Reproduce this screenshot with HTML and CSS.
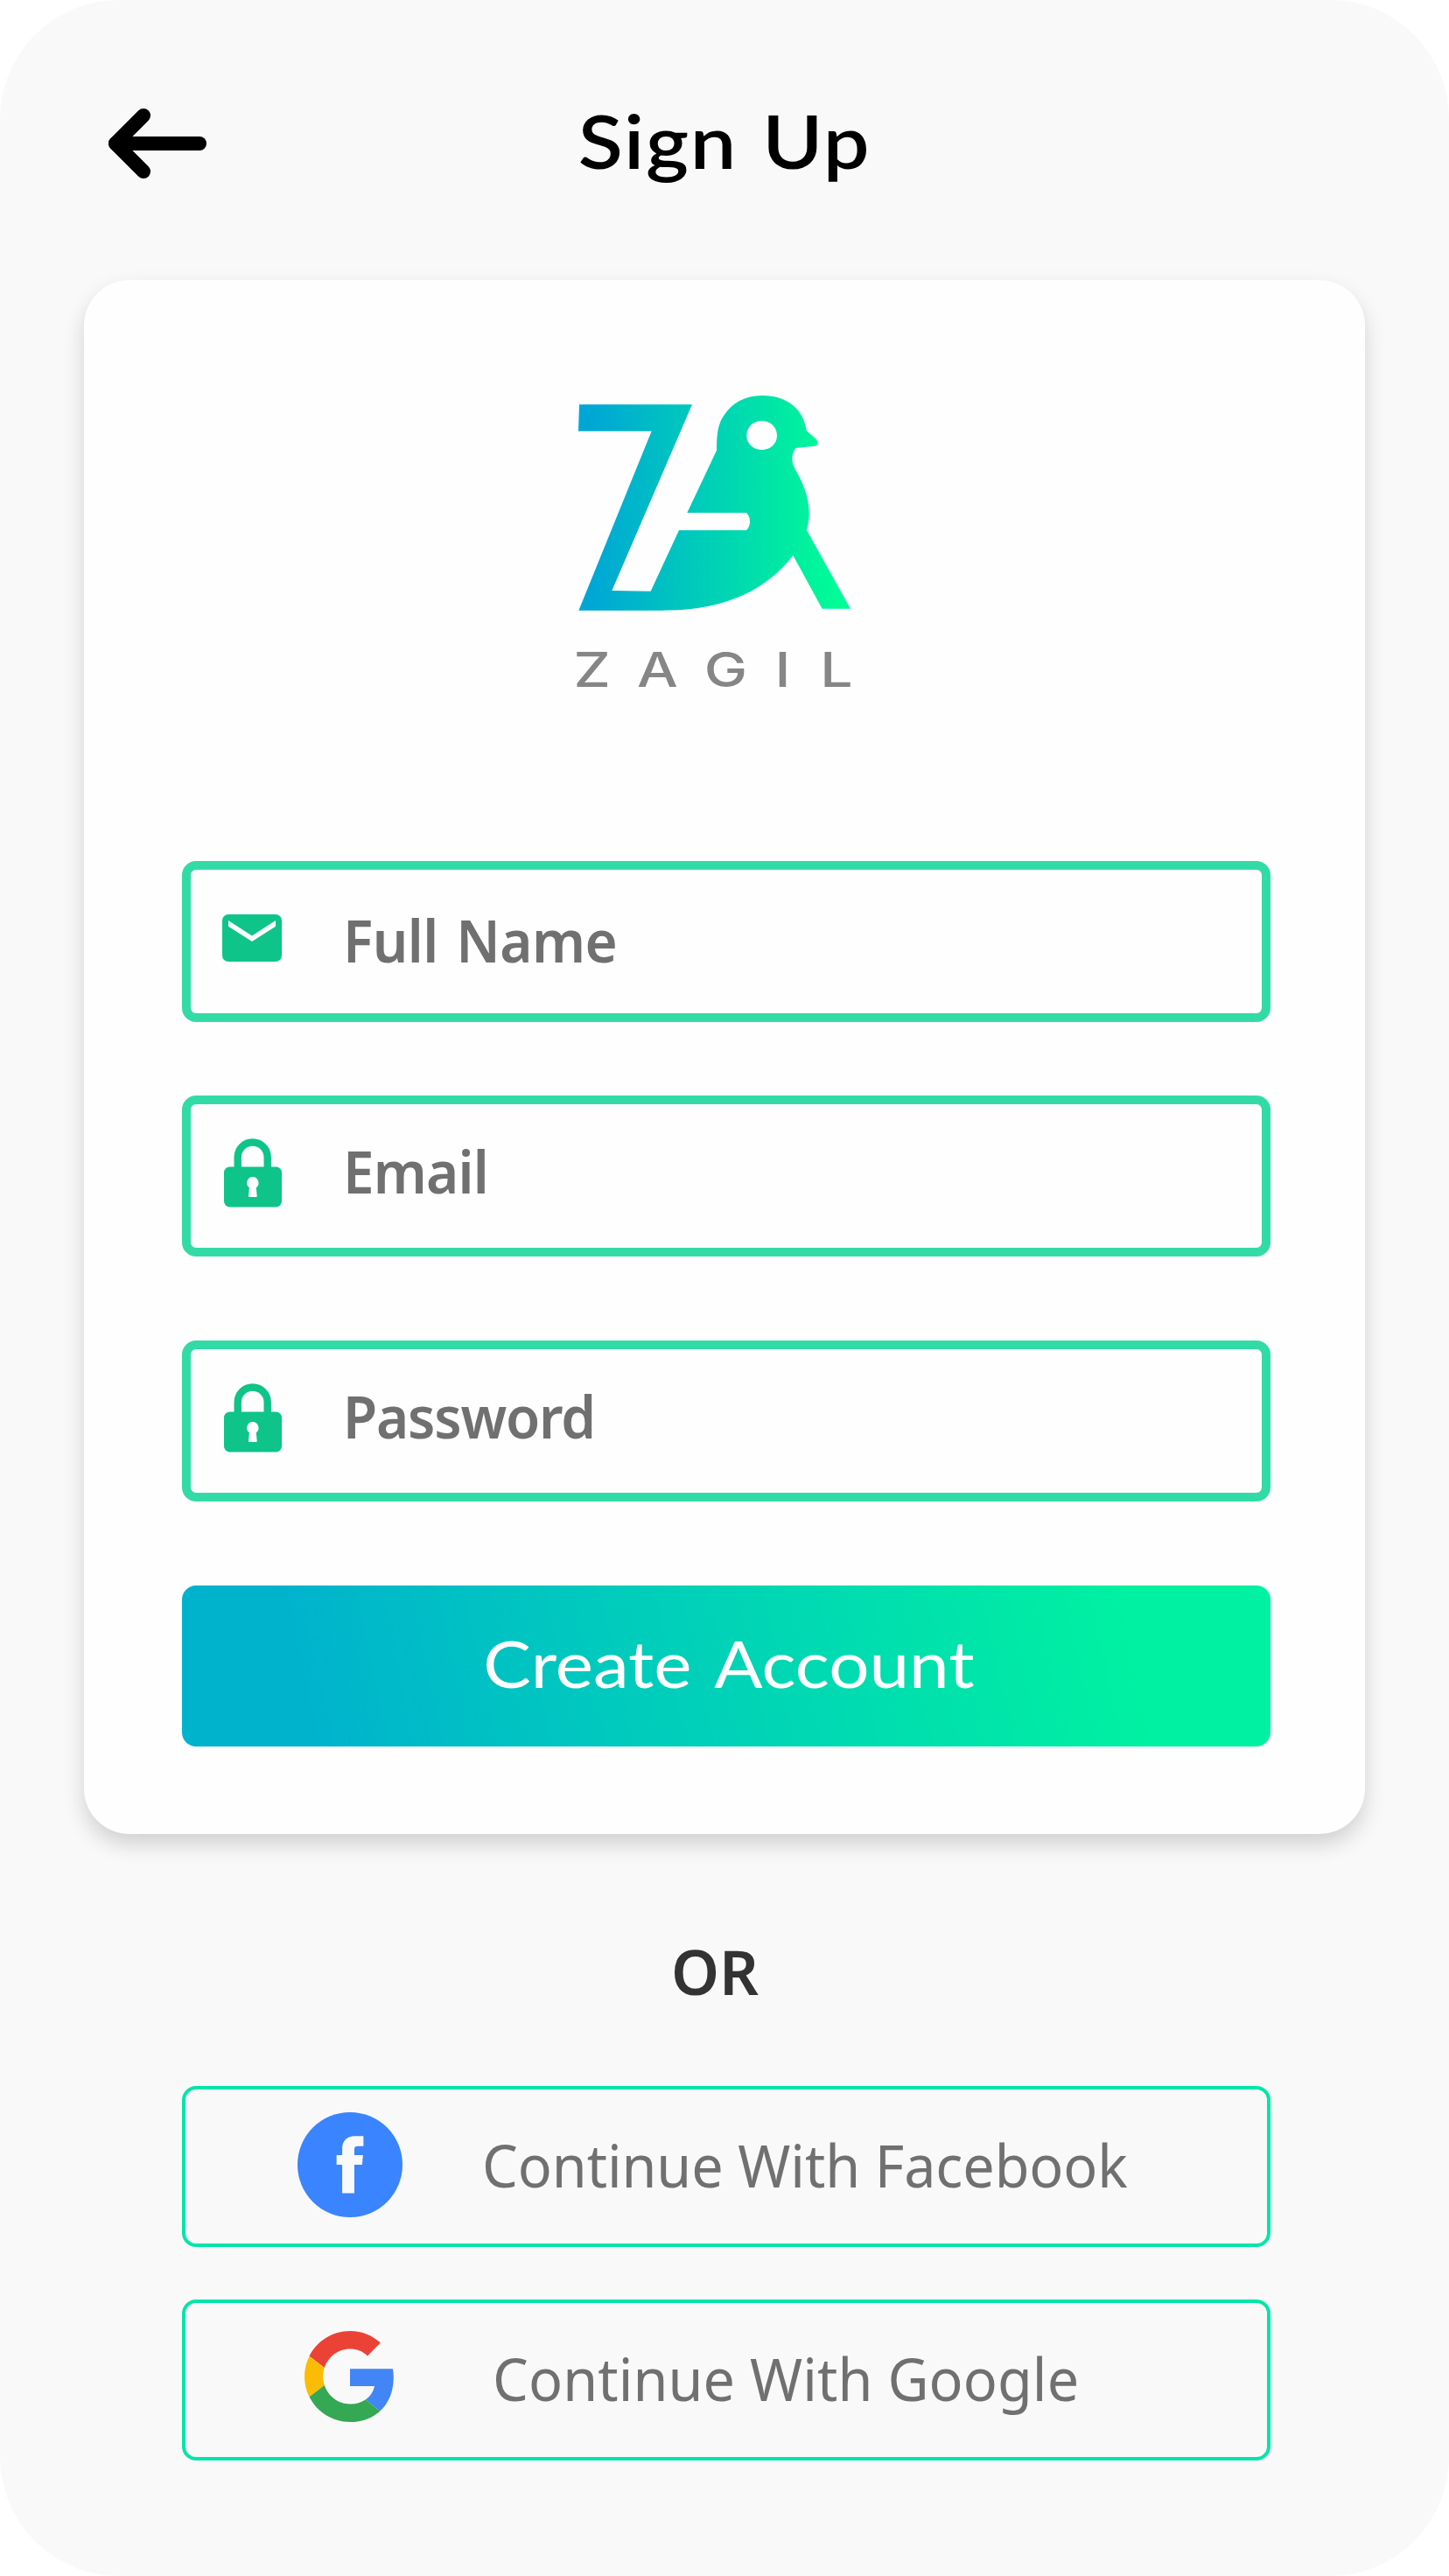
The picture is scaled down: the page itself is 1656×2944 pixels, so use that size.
FILE: index.html
```
<!DOCTYPE html>
<html lang="en">
<head>
  <meta charset="utf-8">
  <title>Sign Up</title>
  <link rel="stylesheet" href="styles.css">
</head>
<body>
  <main class="screen">
    <header class="topbar">
      <a class="back" href="#" aria-label="Back">
        <svg width="112" height="80" viewBox="0 0 112 80" fill="none" stroke="#000" stroke-width="16" stroke-linecap="round" stroke-linejoin="round">
          <path d="M104 40H8"/>
          <path d="M40 8L8 40L40 72"/>
          <path d="M10 40L26 25V55Z" fill="#000" stroke="none"/>
        </svg>
      </a>
      <h1 class="title">Sign Up</h1>
    </header>

    <section class="card">
      <svg class="logo" width="360" height="370" viewBox="0 0 1080 1110" role="img">
        <defs>
          <linearGradient id="brand" gradientUnits="userSpaceOnUse" x1="64" y1="0" x2="996" y2="0">
            <stop offset="0.05" stop-color="#00A7D5"/>
            <stop offset="0.95" stop-color="#00FC96"/>
          </linearGradient>
        </defs>
        <path fill="url(#brand)" fill-rule="evenodd" d="M66 97H453L178 735L311 737L408 528H639Q651 516 651 498T639 468H436L537 254C537 190 544 160 562 134C590 92 634 66 694 66C776 66 836 112 845 187L875 213Q885 221 884 229Q883 238 874 239L808 246C794 264 792 292 804 314C842 380 868 448 846 528L996 797H899L799 614C710 730 570 803 350 803H64L314 188H63ZM692 153C662 153 640 175 640 203C640 231 662 252 692 252C722 252 744 231 744 203C744 175 722 153 692 153Z"/>
        <text class="wordmark" transform="scale(1.2 1)" y="1065" x="39 220 412 613.5 743">ZAGIL</text>
      </svg>

      <form class="form">
        <div class="field field-name">
          <svg class="field-icon" width="68" height="54" viewBox="0 0 68 54">
            <rect width="68" height="54" rx="7" fill="#0EC488"/>
            <path d="M7 7L34 24.5L61 7V13.8L34 31L7 13.8Z" fill="#FEFEFE"/>
          </svg>
          <span class="field-label">Full Name</span>
        </div>
        <div class="field field-email">
          <svg class="field-icon" width="68" height="80" viewBox="0 0 68 80">
            <path d="M17.7 35V22.500a17 17 0 0 1 34 0V35" fill="none" stroke="#0EC488" stroke-width="8.400"/>
            <rect x="2" y="33.500" width="66" height="46" rx="6.500" fill="#0EC488"/>
            <path d="M34.800 45a6.800 6.800 0 0 1 4 12.200L39.700 67Q39.700 68 38.700 68H31Q30 68 30 67L30.900 57.200A6.800 6.800 0 0 1 34.800 45Z" fill="#FEFEFE"/>
          </svg>
          <span class="field-label">Email</span>
        </div>
        <div class="field field-password">
          <svg class="field-icon" width="68" height="80" viewBox="0 0 68 80">
            <path d="M17.700 35V22.500a17 17 0 0 1 34 0V35" fill="none" stroke="#0EC488" stroke-width="8.400"/>
            <rect x="2" y="33.500" width="66" height="46" rx="6.500" fill="#0EC488"/>
            <path d="M34.800 45a6.800 6.800 0 0 1 4 12.200L39.700 67Q39.700 68 38.700 68H31Q30 68 30 67L30.900 57.200A6.800 6.800 0 0 1 34.800 45Z" fill="#FEFEFE"/>
          </svg>
          <span class="field-label">Password</span>
        </div>
        <button class="submit" type="button"><span class="submit-text">Create Account</span></button>
      </form>
    </section>

    <div class="divider">OR</div>

    <div class="social-list">
      <a class="social social-facebook" href="#">
        <svg class="social-icon" width="120" height="120" viewBox="0 0 121 121">
          <circle cx="60.500" cy="60.500" r="60.500" fill="#3A84FF"/>
          <path d="M76 27.500V39H69.500Q65.500 39 65.500 42.500V49.500H75.500L74.500 60.500H65.500V93.300H51.500V60.500H45V49.500H51.500V42C51.500 33 57 27.500 66 27.500Z" fill="#F9F9F9"/>
        </svg>
        <span class="social-text">Continue With Facebook</span>
      </a>
      <a class="social social-google" href="#">
        <svg class="social-icon" width="104" height="104" viewBox="0 0 48 48">
          <path fill="#EA4335" d="M24 9.500c3.540 0 6.710 1.220 9.210 3.600l6.850-6.850C35.900 2.380 30.470 0 24 0 14.620 0 6.510 5.380 2.560 13.220l7.980 6.190C12.430 13.720 17.740 9.500 24 9.500z"/>
          <path fill="#4285F4" d="M46.980 24.550c0-1.570-.15-3.090-.38-4.550H24v9.020h12.940c-.58 2.960-2.260 5.480-4.780 7.180l7.730 6c4.510-4.180 7.090-10.360 7.090-17.650z"/>
          <path fill="#FBBC05" d="M10.530 28.590c-.48-1.450-.76-2.990-.76-4.590s.27-3.140.76-4.590l-7.980-6.190C.92 16.460 0 20.120 0 24c0 3.880.92 7.540 2.560 10.780l7.970-6.190z"/>
          <path fill="#34A853" d="M24 48c6.480 0 11.930-2.130 15.890-5.810l-7.730-6c-2.150 1.450-4.920 2.300-8.160 2.300-6.260 0-11.570-4.220-13.470-9.910l-7.980 6.190C6.510 42.620 14.620 48 24 48z"/>
        </svg>
        <span class="social-text">Continue With Google</span>
      </a>
    </div>
  </main>
</body>
</html>
```
FILE: styles.css
```
* {
  box-sizing: border-box;
}

body {
  margin: 0;
  background: #fff;
  font-family: "Noto Sans", "Open Sans", sans-serif;
  color: #707070;
}

a {
  color: inherit;
  text-decoration: none;
}

svg {
  display: block;
  flex: none;
}

.screen {
  display: flex;
  flex-direction: column;
  width: 1656px;
  height: 2944px;
  padding: 0 96px;
  border-radius: 136px;
  background: #f9f9f9;
}

.topbar {
  display: grid;
  grid-template-columns: 140px 1fr 140px;
  align-items: center;
  height: 328px;
  margin: 0 28px -8px 0;
  padding-left: 28px;
}

.back {
  display: block;
}

.title {
  margin: 0;
  padding-bottom: 7px;
  font: 600 84px/100px Lato, sans-serif;
  letter-spacing: 1.5px;
  word-spacing: 3px;
  text-align: center;
  white-space: nowrap;
  color: #000;
  transform: scaleX(1.115);
}

.card {
  height: 1776px;
  padding: 110px 108px 100px 112px;
  border-radius: 52px;
  background: #fefefe;
  box-shadow: 0 12px 24px rgba(0, 0, 0, 0.16);
}

.logo {
  margin: 0 0 184px 432px;
}

.wordmark {
  font: 500 165px Inter, sans-serif;
  fill: #868686;
}

.form {
  display: flex;
  flex-direction: column;
}

.field {
  display: flex;
  align-items: center;
  height: 184px;
  padding-left: 36px;
  border: 10px solid #32dba5;
  border-radius: 16px;
}

.field-label {
  margin-left: 69.5px;
  font-size: 67px;
  font-weight: 600;
  line-height: 92px;
  white-space: nowrap;
  transform: scaleX(0.95);
  transform-origin: left;
}

.field-name {
  padding-bottom: 4px;
  margin-bottom: 84px;
}

.field-email,
.field-password {
  padding-bottom: 12px;
  margin-bottom: 96px;
}

.field-name .field-icon {
  margin-bottom: 4px;
}

.field-email .field-icon,
.field-password .field-icon {
  margin-top: 4px;
}

.field-name .field-label {
  letter-spacing: -0.6px;
  word-spacing: 5px;
}

.field-email .field-label {
  letter-spacing: -0.8px;
}

.field-password .field-label {
  letter-spacing: -1.25px;
}

.submit {
  display: flex;
  align-items: center;
  justify-content: center;
  height: 184px;
  padding: 0 0 7px 5px;
  border: 0;
  border-radius: 16px;
  background: linear-gradient(78deg, #00b3cd 12%, #00f1a1 87%);
  color: #fff;
}

.submit-text {
  font: 400 74px/90px Lato, sans-serif;
  word-spacing: 7px;
  white-space: nowrap;
  transform: scaleX(1.105);
}

.divider {
  height: 96px;
  margin: 109px 0 83px 671px;
  font-size: 70px;
  font-weight: 600;
  line-height: 96px;
  color: #333;
}

.social-list {
  display: flex;
  flex-direction: column;
  gap: 60px;
  padding: 0 108px 0 112px;
}

.social {
  display: flex;
  align-items: center;
  height: 184px;
  border: 4px solid #00e6a8;
  border-radius: 16px;
}

.social-text {
  font-size: 67px;
  line-height: 92px;
  white-space: nowrap;
  transform: scaleX(0.965);
  transform-origin: left;
}

.social-facebook {
  padding: 0 0 4px 128px;
}

.social-facebook .social-text {
  margin-left: 91px;
  letter-spacing: -0.1px;
}

.social-google {
  padding: 0 0 8px 136px;
}

.social-google .social-text {
  margin: 4px 0 0 111px;
  letter-spacing: 0.1px;
}
```
